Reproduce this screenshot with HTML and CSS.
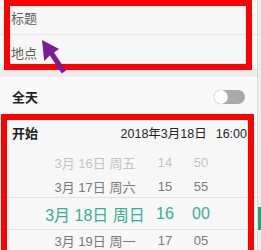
FILE: index.html
```html
<!DOCTYPE html>
<html lang="zh-CN">
<head>
<meta charset="utf-8">
<link rel="stylesheet" href="styles.css">
</head>
<body>
<div class="screen">
  <div class="main">
    <div class="row field">标题</div>
    <div class="row field">地点</div>
    <div class="band"></div>
    <div class="row allday">
      <span class="label">全天</span>
      <span class="toggle"><span class="knob"></span></span>
    </div>
    <div class="row head">
      <span class="label">开始</span>
      <span class="when"><span>2018年3月18日</span><span>16:00</span></span>
    </div>
    <div class="picker">
      <div class="prow far"><span>3月 16日 周五</span><span>14</span><span>50</span></div>
      <div class="prow near"><span>3月 17日 周六</span><span>15</span><span>55</span></div>
      <div class="prow sel"><span>3月 18日 周日</span><span>16</span><span>00</span></div>
      <div class="prow near low"><span>3月 19日 周一</span><span>17</span><span>05</span></div>
    </div>
  </div>
  <div class="edge"><div class="thumb"></div></div>

  <div class="mark mark1"></div>
  <div class="mark mark2"></div>
  <svg class="arrow" width="261" height="250" viewBox="0 0 261 250">
    <polygon points="42,40 59,49 54,52.6 66,70.6 61.8,73.4 49.8,55.6 44.2,61" fill="#7d1a9c"/>
  </svg>
</div>
</body>
</html>
```
FILE: styles.css
```css
html, body {
  margin: 0;
  padding: 0;
}
body {
  width: 261px;
  height: 250px;
  overflow: hidden;
  background: #f6f6f6;
  font-family: "Liberation Sans", "Noto Sans CJK SC", sans-serif;
}
.screen {
  position: relative;
  display: flex;
  align-items: flex-start;
  width: 261px;
  height: 250px;
  overflow: hidden;
}
.main {
  flex: none;
  width: 257px;
  border-right: 1px solid #dcdcdc;
  background: #f7f7f7;
}
.edge {
  flex: none;
  width: 3px;
  height: 250px;
  background: #eeeeee;
}
.thumb {
  margin-top: 207px;
  height: 23px;
  background: #2d9e7c;
}
.row {
  display: flex;
  align-items: center;
  padding: 0 10px 0 12px;
}
.field {
  height: 34px;
  font-size: 13px;
  color: #5e5e5e;
  padding-left: 11px;
}
.field + .field {
  border-top: 1px solid #e6e6e6;
}
.band {
  height: 7px;
  background: #ececec;
  border-top: 1px solid #e4e4e4;
}
.allday {
  height: 39px;
  justify-content: space-between;
  background: #f9f9f9;
}
.label {
  font-size: 13px;
  font-weight: bold;
  color: #222;
}
.toggle {
  width: 31px;
  height: 14px;
  border-radius: 7px;
  background: #a9a9a9;
  margin-right: 2px;
  display: flex;
  align-items: center;
}
.knob {
  width: 14px;
  height: 14px;
  border-radius: 50%;
  background: #fff;
  box-shadow: 0 0 1px rgba(0,0,0,0.35);
}
.head {
  height: 32px;
  justify-content: space-between;
  background: #f7f7f7;
}
.when {
  display: flex;
  align-items: baseline;
  gap: 9px;
  font-size: 12.5px;
  color: #262626;
}
.prow {
  display: grid;
  grid-template-columns: 110px 30px 42px;
  padding-left: 40px;
  align-items: center;
  font-size: 13px;
  color: #7a7a7a;
}
.prow span {
  text-align: center;
  white-space: nowrap;
}
.far {
  height: 28px;
  color: #c4c4c4;
}
.near {
  height: 21px;
}
.sel {
  height: 31px;
  font-size: 16px;
  color: #35b290;
  border-top: 1px solid #e2e2e2;
  border-bottom: 1px solid #e2e2e2;
}
.low {
  height: 20px;
}
.mark {
  position: absolute;
  border: 6px solid #ff0000;
  box-sizing: border-box;
}
.mark1 {
  left: 4px;
  top: 0;
  width: 248px;
  height: 70px;
}
.mark2 {
  left: 1px;
  top: 114px;
  width: 253px;
  height: 160px;
}
.arrow {
  position: absolute;
  left: 0;
  top: 0;
}
```
